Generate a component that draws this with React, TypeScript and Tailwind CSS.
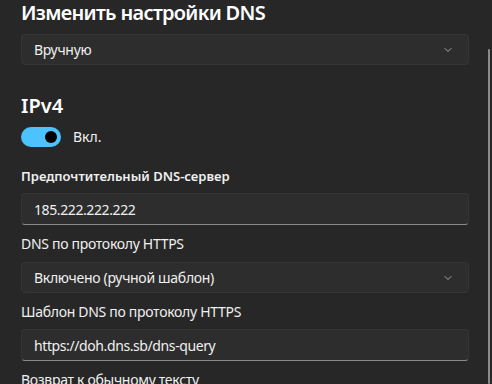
import React from 'react';
import { ChevronDown } from 'lucide-react';

const font = { fontFamily: '"Noto Sans", "Open Sans", sans-serif' };

function Select({ value }: { value: string }) {
    return (
        <div className="flex h-[31px] items-center justify-between rounded-[4px] border border-[#353535] bg-[#2d2d2d] pl-3 pr-[14px]">
            <span className="text-[14px] tracking-[-0.3px] text-[#f0f0f0]">{value}</span>
            <ChevronDown className="h-3 w-3 text-[#cfcfcf]" strokeWidth={1.5} />
        </div>
    );
}

function Field({ value }: { value: string }) {
    return (
        <div className="flex h-[32px] items-center rounded-[4px] border border-[#353535] border-b-[#8a8a8a] bg-[#2d2d2d] px-3">
            <span className="text-[14px] tracking-[-0.4px] text-[#f0f0f0]">{value}</span>
        </div>
    );
}

export default function App() {
    return (
        <div className="relative h-[384px] w-[492px] overflow-hidden bg-[#272727] text-white" style={font}>
            <div className="ml-[21px] flex w-[448px] flex-col">
                <h1 className="text-[20px] font-semibold leading-[26px] tracking-[-0.7px] text-white">Изменить настройки DNS</h1>
                <div className="mt-[8px]">
                    <Select value="Вручную" />
                </div>

                <h2 className="mt-[28px] text-[20px] font-semibold leading-[26px]">IPv4</h2>
                <div className="mt-[7px] flex items-center gap-3">
                    <div className="flex h-[20px] w-[40px] items-center justify-end rounded-full bg-[#4cc2ff] pr-[4px]">
                        <div className="h-[12px] w-[12px] rounded-full bg-black" />
                    </div>
                    <span className="text-[14px] text-[#f0f0f0]">Вкл.</span>
                </div>

                <div className="mt-[19px] text-[13px] font-semibold leading-[20px] text-[#f0f0f0]">Предпочтительный DNS-сервер</div>
                <div className="mt-[7px]">
                    <Field value="185.222.222.222" />
                </div>

                <div className="mt-[9px] text-[14px] leading-[20px] tracking-[-0.3px] text-[#f0f0f0]">DNS по протоколу HTTPS</div>
                <div className="mt-[8px]">
                    <Select value="Включено (ручной шаблон)" />
                </div>

                <div className="mt-[9px] text-[14px] leading-[20px] tracking-[-0.3px] text-[#f0f0f0]">Шаблон DNS по протоколу HTTPS</div>
                <div className="mt-[7px]">
                    <Field value="https://doh.dns.sb/dns-query" />
                </div>

                <div className="mt-[9px] text-[14px] leading-[20px] tracking-[-0.3px] text-[#f0f0f0]">Возврат к обычному тексту</div>
            </div>
            <div className="absolute bottom-0 right-[2px] top-[49px] w-[2px] rounded-full bg-[#8a8a8a]" />
        </div>
    );
}
